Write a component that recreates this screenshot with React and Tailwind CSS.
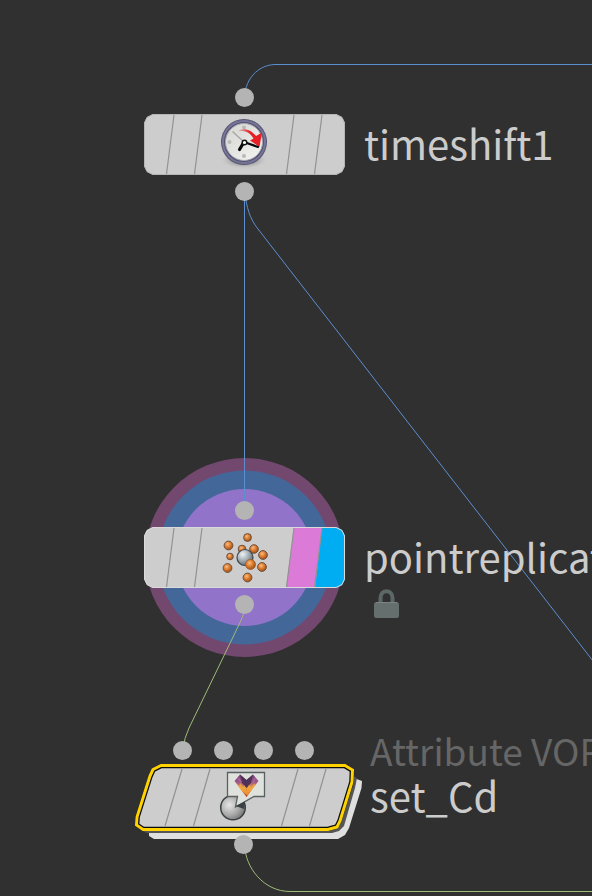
import React from "react";

const RINGS = [
  { r: 99.5, fill: "#73486f" },
  { r: 87, fill: "#446799" },
  { r: 68.5, fill: "#9173ca" },
];

function Port() {
  return <span className="block size-[19px] rounded-full bg-[#b4b4b4]" />;
}

function ClockIcon() {
  return (
    <g>
      <ellipse cx="100" cy="46" rx="24" ry="9" fill="url(#shade)" />
      <circle cx="100" cy="28" r="23" fill="#55546f" />
      <circle cx="100" cy="28" r="21" fill="none" stroke="#77769a" strokeWidth="2" />
      <circle cx="100" cy="28" r="18.5" fill="url(#dial)" stroke="#a5a5b4" strokeWidth="1" />
      <g fill="#b9b9b7">
        <circle cx="100" cy="13.5" r="2" />
        <circle cx="85.5" cy="28" r="2" />
        <circle cx="100" cy="42" r="2" />
      </g>
      <path d="M100 28 88.5 17.5" stroke="#aaa9a5" strokeWidth="1.6" />
      <path d="M93.5 17.5C99 13 107 15.5 112 22L118 18.5 115.500 33 106 26.5 109.5 24.5C106 18 100 16 93.5 17.5Z" fill="url(#redFade)" />
      <path d="M100 28 95.5 35.5" stroke="#080808" strokeWidth="3.2" strokeLinecap="round" />
      <path d="M100 28 114 33" stroke="#080808" strokeWidth="2.2" strokeLinecap="round" />
      <circle cx="100.5" cy="28.5" r="2.3" fill="#fff" stroke="#111" strokeWidth="1.4" />
    </g>
  );
}

const BALLS = [
  [103.5, 10.5, 3.9],
  [84.5, 18.5, 4.4],
  [98, 22, 3.8],
  [110, 22, 4.3],
  [86, 29.5, 3.3],
  [119, 28, 4.4],
  [83.5, 41, 4.4],
  [118, 40, 4.4],
  [103.5, 50.5, 4.4],
];

function ReplicateIcon() {
  return (
    <g>
      {BALLS.map(([x, y, r]) => (
        <circle key={`${x}-${y}`} cx={x} cy={y} r={r} fill="url(#orange)" stroke="#6e513f" strokeWidth="1" />
      ))}
      <circle cx="101" cy="30.5" r="8" fill="url(#steel)" stroke="#3f444a" strokeWidth="1.2" />
      <circle cx="106.500" cy="37.5" r="5" fill="url(#orange)" stroke="#9a5a2a" strokeWidth="0.8" />
    </g>
  );
}

function VopIcon() {
  return (
    <g>
      <circle cx="98" cy="43.5" r="12.3" fill="url(#sphere)" stroke="#3a4042" strokeWidth="1.5" />
      <path d="M92.5 8.500H129.5V32.500H119L100.5 43 102.5 32.500H92.5Z" fill="#dfe1dc" stroke="#596062" strokeWidth="1.3" />
      <path d="M100.500 42 110 37.500 109 45Z" fill="#3b4042" />
      <path d="M105 10.500 111.500 16 118 10.500 123.500 17 111.500 33 99.500 17Z" fill="url(#flame)" />
      <path d="M105 10.500 111.500 16V24L107 19ZM118 10.500 111.500 16V24L116 19Z" fill="#513158" />
      <path d="M101 19 104 22 105.500 19 108 24.500 109.500 21 111.500 27 114 20.500 116 24 119 19.500 120.500 21 112 31.500 106 26Z" fill="#f4a83c" opacity=".75" />
      <path d="M103 14 106 18M120 14 118 19" stroke="#a9689c" strokeWidth="1.5" />
    </g>
  );
}

function TileBody({ flagged, children }) {
  return (
    <svg className="block h-[61px] w-[201px]" viewBox="0 0 201 61" aria-hidden="true">
      <clipPath id="tileClip">
        <path d="M9 0H192L198 3 201 9V52L198 58 192 61H9L3 58 0 52V9L3 3Z" />
      </clipPath>
      <g clipPath="url(#tileClip)">
        <rect width="201" height="61" fill="#cdcdcd" />
        {flagged && <path d="M150 0H178L171 61H142Z" fill="#dc7bd7" />}
        {flagged && <path d="M178 0H201V61H171Z" fill="#00adf2" />}
        <path d="M30 1 22.5 60M58 1 50.5 60M150 1 142.5 60M178 1 170.5 60" stroke="#929292" strokeWidth="1.2" />
      </g>
      <path
        d="M9 .5H192L198 3.5 200.5 9V52L198 57.5 192 60.5H9L3 57.5.5 52V9L3 3.5Z"
        fill="none"
        stroke={flagged ? "#dadada" : "#b5b5b5"}
      />
      {children}
    </svg>
  );
}

function SlantedBody({ children }) {
  return (
    <svg className="block h-[75px] w-[227px]" viewBox="0 0 227 75" aria-hidden="true">
      <path d="M219 14 227 17 226.5 24 214 64 210 71 203 75H19L14 72V66Z" fill="#dfdfdf" />
      <path d="M214 10 222 14 220 24 209 62 204 67 197 69H12L6 66Z" fill="#555" />
      <clipPath id="slantClip">
        <path d="M25 0H211L219 5V18L206 59 203 64 194 67H7L0 62V53L14 11 17 5Z" />
      </clipPath>
      <path
        d="M26 1.5H210L217.5 6 217 18 205 57 202 63 193 65.5H8L1.5 61 2 53 15 12 18 5.5Z"
        fill="#cdcdcd"
        stroke="#0c0c0c"
        strokeWidth="5.6"
        strokeLinejoin="round"
        clipPath="url(#slantClip)"
      />
      <path d="M26 1.5H210L217.5 6 217 18 205 57 202 63 193 65.5H8L1.5 61 2 53 15 12 18 5.5Z" fill="none" stroke="#ffd200" strokeWidth="3" />
      <path d="M47 5 30 62M75 5 58.5 62M163 5 146.5 62M191 5 174.5 62" stroke="#929292" strokeWidth="1.2" />
      {children}
    </svg>
  );
}

function LockIcon() {
  return (
    <svg className="block h-[29px] w-[25px]" viewBox="0 0 25 29" aria-label="Locked" role="img">
      <path d="M6.5 14V9C6.5 0 18.5 0 18.5 9V14" fill="none" stroke="#5c6866" strokeWidth="4" />
      <rect y="13" width="25" height="16" rx="2.5" fill="#65706e" />
      <path d="M2 13.5H23" stroke="#7b8583" />
    </svg>
  );
}

function Tile({ className, name, flagged, locked, children }) {
  return (
    <article className={`absolute grid grid-cols-[201px_auto] gap-x-[19px] gap-y-[7px] ${className}`}>
      <div className="flex justify-center"><Port /></div>
      <span />
      <TileBody flagged={flagged}>{children}</TileBody>
      <h2 className="self-center whitespace-nowrap pb-1">{name}</h2>
      <div className="flex justify-center"><Port /></div>
      {locked && <div className="-mt-1.5 pl-2.5"><LockIcon /></div>}
    </article>
  );
}

export default function App() {
  return (
    <main className="relative h-screen w-full overflow-hidden bg-[#303030] font-['Noto_Sans_CJK_SC','Noto_Sans',sans-serif] text-[40px] leading-[46px] text-[#cccccc]">
      <svg className="absolute inset-0 size-full" aria-hidden="true">
        <defs>
          <radialGradient id="shade">
            <stop offset=".3" stopColor="#777" />
            <stop offset="1" stopColor="#cdcdcd" stopOpacity="0" />
          </radialGradient>
          <linearGradient id="dial" x1="0" y1="0" x2="1" y2="1">
            <stop stopColor="#d4d4d1" />
            <stop offset="1" stopColor="#f5f5f3" />
          </linearGradient>
          <linearGradient id="redFade">
            <stop stopColor="#e62025" stopOpacity=".15" />
            <stop offset=".5" stopColor="#e62025" />
          </linearGradient>
          <radialGradient id="orange" cx=".4" cy=".35" r=".65">
            <stop stopColor="#f7bd88" />
            <stop offset=".5" stopColor="#e07d2c" />
            <stop offset="1" stopColor="#9c511b" />
          </radialGradient>
          <radialGradient id="steel" cx=".35" cy=".3" r=".75">
            <stop stopColor="#eef2f4" />
            <stop offset=".5" stopColor="#a6b0b7" />
            <stop offset="1" stopColor="#5b646b" />
          </radialGradient>
          <radialGradient id="sphere" cx=".35" cy=".4" r=".7">
            <stop stopColor="#e6e6e6" />
            <stop offset=".6" stopColor="#a8a8a8" />
            <stop offset="1" stopColor="#707070" />
          </radialGradient>
          <linearGradient id="flame" x1="0" y1="0" x2="0" y2="1">
            <stop stopColor="#74407c" />
            <stop offset=".35" stopColor="#a0588a" />
            <stop offset=".6" stopColor="#eba040" />
            <stop offset="1" stopColor="#b8280d" />
          </linearGradient>
        </defs>
        {RINGS.map((ring) => (
          <circle key={ring.r} cx="244.5" cy="557.5" r={ring.r} fill={ring.fill} />
        ))}
      </svg>

      <svg className="absolute inset-0 size-full" fill="none" aria-hidden="true">
        <g stroke="#5b8fd0">
          <path d="M245 92C248 76 260 64.5 276 64.5H2000" />
          <path d="M244.5 191V510" />
          <path d="M245 191C246 207 250 219 258 229L928 1093" />
        </g>
        <g stroke="#9ebb79">
          <path d="M244 612C242 620 238 626 234 635L189 728Q184 738 183 750" />
          <path d="M244.5 844C245 868 264 891.5 290 891.5H2000" />
        </g>
      </svg>

      <Tile className="left-36 top-[88px]" name="timeshift1"><ClockIcon /></Tile>
      <Tile className="left-36 top-[501px]" name="pointreplicate1" flagged locked><ReplicateIcon /></Tile>

      <article className="absolute left-[135px] top-[741px] flex items-start gap-2">
        <div className="flex w-[227px] flex-col">
          <div className="mb-1 ml-[38px] flex w-[141px] justify-between">
            <Port /><Port /><Port /><Port />
          </div>
          <SlantedBody><VopIcon /></SlantedBody>
          <div className="-mt-1 ml-[99px]"><Port /></div>
        </div>
        <div className="-mt-[13px] whitespace-nowrap leading-[45px]">
          <p className="text-[37px] text-[#666666]">Attribute VOP</p>
          <h2>set_Cd</h2>
        </div>
      </article>
    </main>
  );
}
